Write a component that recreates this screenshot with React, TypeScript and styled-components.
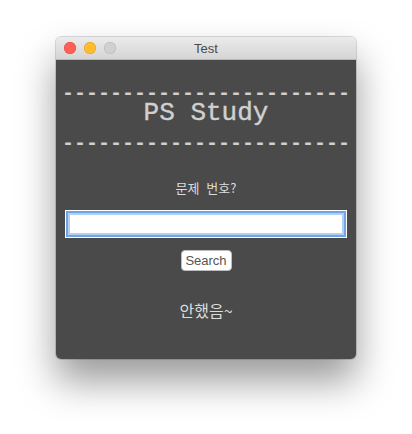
import React from "react";
import styled, { createGlobalStyle } from "styled-components";

const Global = createGlobalStyle`
  html, body { margin: 0; padding: 0; background: #ffffff; }
  body { font-family: "Liberation Sans", "Noto Sans CJK KR", sans-serif; }
`;

const Page = styled.div`
  box-sizing: border-box;
  height: 434px;
  padding: 37px 0 0 56px;
`;

const Window = styled.div`
  width: 300px;
  border-radius: 5px;
  box-shadow: 0 22px 38px rgba(0, 0, 0, 0.4), 0 0 0 1px rgba(0, 0, 0, 0.14);
  overflow: hidden;
`;

const TitleBar = styled.div`
  position: relative;
  height: 23px;
  background: linear-gradient(#ebebeb, #d5d5d5);
  border-bottom: 1px solid #b8b8b8;
  box-sizing: border-box;
  display: flex;
  align-items: center;
  justify-content: center;
`;

const Lights = styled.div`
  position: absolute;
  left: 8px;
  top: 5px;
  display: flex;
  gap: 8px;
`;

const Light = styled.span<{ $c: string; $b: string }>`
  width: 12px;
  height: 12px;
  border-radius: 50%;
  background: ${(p) => p.$c};
  box-shadow: inset 0 0 0 0.5px ${(p) => p.$b};
`;

const Title = styled.span`
  font-size: 13px;
  color: #4a4a4a;
  font-family: "Liberation Sans", sans-serif;
`;

const Content = styled.div`
  height: 299px;
  background: #4a4a4a;
  display: flex;
  flex-direction: column;
  align-items: center;
  color: #d6d6d6;
`;

const Dashes = styled.div<{ $top: number }>`
  margin-top: ${(p) => p.$top}px;
  font-family: "Liberation Mono", monospace;
  font-weight: bold;
  font-size: 20px;
  line-height: 13px;
  height: 13px;
  white-space: nowrap;
  color: #d0d0d0;
`;

const Heading = styled.div`
  margin-top: 1px;
  font-family: "Liberation Mono", monospace;
  font-weight: normal;
  -webkit-text-stroke: 0.4px #d0d0d0;
  font-size: 26px;
  line-height: 24px;
  height: 24px;
  color: #d0d0d0;
`;

const Label = styled.div`
  margin-top: 28px;
  font-family: "Noto Sans CJK KR", sans-serif;
  font-size: 13px;
  line-height: 20px;
  word-spacing: 4px;
  color: #dcdcdc;
`;

const Input = styled.input`
  margin-top: 12px;
  width: 282px;
  height: 28px;
  box-sizing: border-box;
  background: #fff;
  border: 1px solid #fff;
  box-shadow: inset 0 0 0 2px #6fa4e6, inset 0 0 0 4px #b3cff2;
  outline: none;
  padding: 0 6px;
`;

const Button = styled.button`
  margin-top: 12px;
  width: 51px;
  height: 21px;
  padding: 0;
  background: #fff;
  border: 1px solid #bdbdbd;
  border-radius: 4px;
  font-family: "Liberation Sans", sans-serif;
  font-size: 13px;
  color: #555;
`;

const Result = styled.div`
  margin-top: 28px;
  font-family: "Noto Sans CJK KR", sans-serif;
  font-size: 16px;
  line-height: 22px;
  color: #dcdcdc;
`;

const DASH = "------------------------";

export default function App() {
  return (
    <>
      <Global />
      <Page>
        <Window>
          <TitleBar>
            <Lights>
              <Light $c="#fe5f57" $b="#e2463f" />
              <Light $c="#febc2e" $b="#e1a116" />
              <Light $c="#d0d0d0" $b="#b5b5b5" />
            </Lights>
            <Title>Test</Title>
          </TitleBar>
          <Content>
            <Dashes $top={27}>{DASH}</Dashes>
            <Heading>PS Study</Heading>
            <Dashes $top={12}>{DASH}</Dashes>
            <Label>문제 번호?</Label>
            <Input />
            <Button>Search</Button>
            <Result>안했음~</Result>
          </Content>
        </Window>
      </Page>
    </>
  );
}
